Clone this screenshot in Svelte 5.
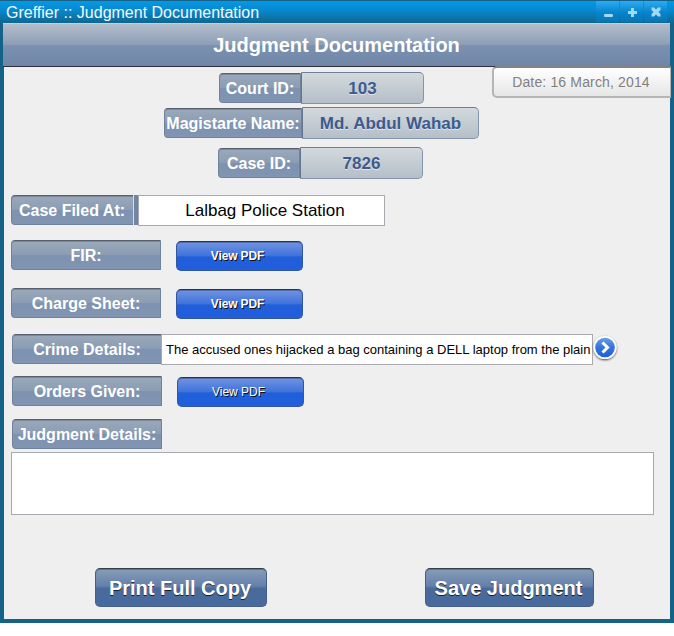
<script>
  const courtRows = [
    { label: 'Court ID:', value: '103', left: 215, top: 5, lw: 82, vw: 123 },
    { label: 'Magistarte Name:', value: 'Md. Abdul Wahab', left: 160, top: 3, lw: 138, vw: 177 },
    { label: 'Case ID:', value: '7826', left: 214, top: 8, lw: 82, vw: 123 }
  ];
</script>

<div class="window">
  <div class="titlebar">
    <span class="title">Greffier :: Judgment Documentation</span>
    <div class="controls">
      <button aria-label="Minimize"><svg width="23" height="20"><rect x="8" y="12" width="9" height="3" rx="1.2" /></svg></button>
      <button aria-label="Maximize"><svg width="23" height="20"><path d="M11 6h3v3h3v3h-3v3h-3v-3H8V9h3z" /></svg></button>
      <button aria-label="Close"><svg width="23" height="20"><path transform="translate(0 -.5)" d="M7.500 6h2.500l2 2 2-2h2.500v2.500l-2 2 2 2V15H14l-2-2-2 2H7.500v-2.500l2-2-2-2z" /></svg></button>
    </div>
  </div>
  <div class="client">
    <header><h1>Judgment Documentation</h1></header>
    <div class="date">Date: 16 March, 2014</div>

    {#each courtRows as r}
      <div class="court" style="margin-left:{r.left}px;margin-top:{r.top}px">
        <div class="label" style="width:{r.lw}px">{r.label}</div>
        <div class="value" style="width:{r.vw}px">{r.value}</div>
      </div>
    {/each}

    <div class="row filed">
      <div class="label split">Case Filed At:</div>
      <div class="field station">Lalbag Police Station</div>
    </div>
    <div class="row fir">
      <div class="label">FIR:</div>
      <button class="pdf"><b>View PDF</b></button>
    </div>
    <div class="row charge">
      <div class="label">Charge Sheet:</div>
      <button class="pdf"><b>View PDF</b></button>
    </div>
    <div class="row crime">
      <div class="label">Crime Details:</div>
      <div class="field details">The accused ones hijacked a bag containing a DELL laptop from the plain</div>
      <button class="go" aria-label="Show more">
        <svg width="28" height="30" viewBox="0 0 28 30">
          <defs>
            <linearGradient id="blue" x1="0" y1="0" x2="0" y2="1">
              <stop offset="0" stop-color="#6c9ce6" /><stop offset=".5" stop-color="#3475d9" /><stop offset="1" stop-color="#1b5fdc" />
            </linearGradient>
            <filter id="shade" x="-20%" y="-20%" width="150%" height="150%"><feDropShadow dx="0" dy="1" stdDeviation="1" flood-color="#000" flood-opacity=".7" /></filter>
          </defs>
          <circle cx="13" cy="13.500" r="11.500" fill="#fff" filter="url(#shade)" />
          <circle cx="13" cy="13.500" r="9.800" fill="url(#blue)" />
          <path d="M10.500 8.500l5 5-5 5" fill="none" stroke="#fff" stroke-width="3" />
        </svg>
      </button>
    </div>
    <div class="row orders">
      <div class="label">Orders Given:</div>
      <button class="pdf">View PDF</button>
    </div>
    <div class="row judgment">
      <div class="label">Judgment Details:</div>
    </div>
    <div class="notes"></div>
    <footer>
      <button class="action print">Print Full Copy</button>
      <button class="action save">Save Judgment</button>
    </footer>
  </div>
</div>

<style>
  :global(body) { background: #fff; }
  * { box-sizing: border-box; }
  button { border: 0; padding: 0; margin: 0; font-family: inherit; }
  .window {
    width: 674px; height: 623px; background: #156289; padding: 0 4px 4px;
    font-family: "Liberation Sans", Arial, sans-serif; white-space: nowrap;
    display: flex; flex-direction: column;
  }
  .titlebar {
    height: 23px; margin: 0 -4px; padding: 1px 7px 0 6px; flex: none;
    border-top: 1px solid #156289;
    display: flex; justify-content: space-between;
    background: linear-gradient(#0498e8, #0787cb 45%, #11668f);
  }
  .title { color: #f2faff; font-size: 16px; line-height: 21px; }
  .controls { display: flex; gap: 1px; margin-top: -1px; height: 21px; }
  .controls button { width: 23px; height: 21px; background: linear-gradient(#2bacf5, #0784cb 55%, #0876b4); }
  .controls svg { display: block; fill: #a3d9f5; }
  .client { position: relative; flex: 1; background: #efefef; }
  header {
    height: 44px; margin-left: -1px; border-top: 1px solid #c3cfdb; border-bottom: 1px solid #2b303b;
    background: linear-gradient(#b3becb, #8c9db5 50%, #7b91b2 51%, #7186a6);
    display: flex; justify-content: center;
  }
  h1 { margin: 0; color: #fff; font-size: 20px; line-height: 42px; font-weight: bold; }
  .date {
    position: absolute; left: 488px; top: 43px; width: 179px; height: 32px;
    border: 2px solid #b5b5b5; border-top-color: #838383; border-right-width: 1px; border-radius: 5px 0 0 5px;
    background: linear-gradient(#fff, #e6e6e6);
    color: #808080; font-size: 14px; line-height: 29px; text-align: center; letter-spacing: 0.15px; padding-right: 2px;
  }
  .court { display: flex; align-items: center; height: 32px; }
  .label {
    flex: none; width: 150px; height: 30px; line-height: 29px; text-align: center;
    color: #fff; font-size: 16px; font-weight: bold;
    border: 1px solid #71829d; border-top: 1px solid #59616e; border-radius: 4px 0 0 4px;
    background: linear-gradient(#9aa9ba, #8c9db3 48%, #7d92b1 52%, #8195b2);
    box-shadow: inset 0 1px #7c8798;
  }
  .value {
    height: 32px; line-height: 31px; text-align: center; font-size: 17px; font-weight: bold;
    color: #3b5b8c; border: 1px solid #8494aa; border-top-color: #6e7e96; border-left-color: #65758f;
    border-radius: 0 5px 5px 0; text-shadow: 0 1px #e0e4e9;
    background: linear-gradient(#d3d9dd, #b5bfc8);
  }
  .row { display: flex; align-items: flex-start; margin-left: 7px; height: 31px; }
  .filed { margin-top: 16px; }
  .fir { margin-top: 14px; }
  .charge { margin-top: 17px; }
  .crime { margin-top: 15px; margin-left: 8px; }
  .orders { margin-top: 11px; margin-left: 8px; }
  .judgment { margin-top: 12px; margin-left: 8px; }
  .split { width: 127px; padding-right: 5px; position: relative; }
  .split::after { content: ""; position: absolute; right: 0; top: -1px; width: 3px; height: 30px; border: solid #d6dde6; border-width: 0 0 0 1px; background: #7186a6; }
  .field { height: 31px; background: #fff; border: 1px solid #a9a9af; color: #000; }
  .station { width: 247px; font-size: 17px; line-height: 29px; text-align: center; padding-left: 7px; letter-spacing: -0.02px; }
  .details { width: 432px; margin-left: -1px; font-size: 13px; line-height: 29px; padding-left: 4px; overflow: hidden; }
  .go { background: none; width: 28px; height: 30px; margin-left: -1px; }
  .go svg { display: block; }
  .pdf {
    width: 127px; height: 30px; margin: 1px 0 0 15px; border: 1px solid #31579f; border-top-color: #253351; border-radius: 5px;
    background: linear-gradient(#7094e1, #3f72db 50%, #205edb 53%, #205edb);
    color: #fff; font-size: 12px; line-height: 28px; text-align: center; padding-right: 4px;
    text-shadow: 1px 1px #111; box-shadow: inset 0 1px #506eae;
  }
  .pdf b { letter-spacing: -0.15px; }
  .notes { height: 63px; width: 643px; margin: 2px 0 0 7px; background: #fff; border: 1px solid #a9a9af; }
  footer { display: flex; margin: 53px 0 0 91px; gap: 158px; }
  .action {
    height: 39px; border: 1px solid #455f89; border-top-color: #353d4b; border-radius: 5px; color: #fff;
    font-size: 20px; line-height: 37px; padding: 1px 2px 0 0; font-weight: bold; text-align: center;
    background: linear-gradient(#879cb8, #6480aa 46%, #486a9b 53%, #486b9d);
    text-shadow: 0 1px #151d28; box-shadow: inset 0 1px #64738a;
  }
  .print { width: 172px; }
  .save { width: 169px; }
</style>
